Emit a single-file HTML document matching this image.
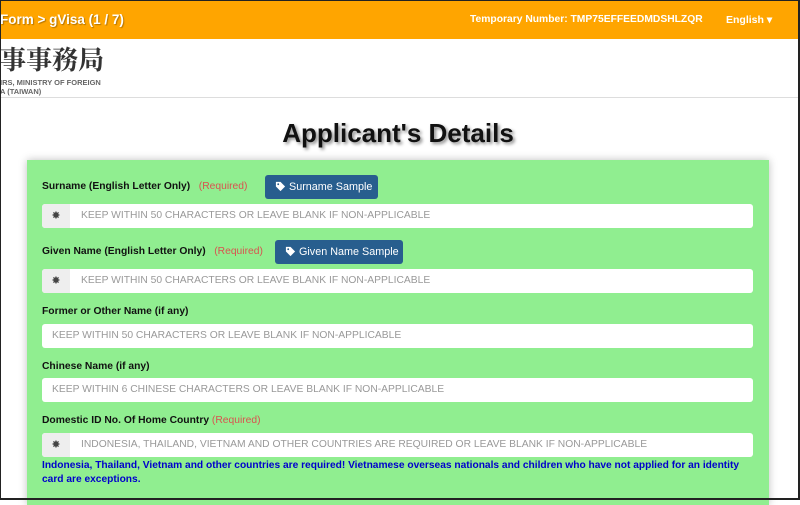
<!DOCTYPE html>
<html><head><meta charset="utf-8"><style>
*{box-sizing:border-box;margin:0;padding:0}
body{width:800px;height:500px;overflow:hidden;background:#fff;font-family:"Liberation Sans",Arial,sans-serif;position:relative}
.frame{position:absolute;inset:0;border:1px solid #222;border-right:2px solid #222;border-bottom:2px solid #222;pointer-events:none;z-index:9}
.top{position:absolute;left:0;top:0;width:800px;height:39px;background:#ffa500;color:#fff;font-weight:bold}
.top .t{position:absolute;left:0;top:12px;font-size:13.5px;text-shadow:1px 1px 1px rgba(0,0,0,.3)}
.top .n{position:absolute;left:470px;top:14px;font-size:10.3px}
.top .e{position:absolute;left:726px;top:14px;font-size:10.5px}
.logo{position:absolute;left:0;top:40px;width:800px;height:58px;border-bottom:1px solid #ddd}
.logo .c{position:absolute;left:0;top:3px;font-family:"Noto Serif CJK SC","Noto Sans CJK TC",serif;font-size:26px;font-weight:bold;color:#333;line-height:32px}
.logo .s{position:absolute;left:0;font-size:7.5px;color:#666;font-weight:bold}
h1{position:absolute;left:0;width:796px;text-align:center;top:118px;font-size:26px;font-weight:bold;color:#111;text-shadow:2px 2px 3px rgba(0,0,0,.45)}
.panel{position:absolute;left:27px;top:160px;width:742px;height:345px;background:#90ee90;box-shadow:0 0 8px rgba(0,0,0,.25)}
.lbl{position:absolute;left:42px;font-size:10.3px;font-weight:bold;color:#111}
.req{color:#d9534f;font-weight:normal}
.btn{position:absolute;height:24px;background:#285e8e;color:#fff;border-radius:3px;font-size:10.8px;line-height:24px;padding-left:10px}
.btn svg{vertical-align:-2px;margin-right:3px}
.in{position:absolute;left:42px;width:711px;height:24px;background:#fff;border-radius:3px;font-size:10.3px;color:#999;line-height:24px}
.in .a{position:absolute;left:0;top:0;width:28px;height:24px;background:#eee;border-radius:3px 0 0 3px;text-align:center;color:#444;font-size:11px}
.in .p{position:absolute;left:39px}
.in.n .p{left:10px}
.note{position:absolute;left:42px;top:459px;width:715px;font-size:10.2px;font-weight:bold;color:#0000cc;line-height:14px}
</style></head><body>
<div class="top"><div class="t">Form &gt; gVisa (1 / 7)</div><div class="n">Temporary Number: TMP75EFFEEDMDSHLZQR</div><div class="e">English ▾</div></div>
<div class="logo"><div class="c">事事務局</div><div class="s" style="top:38px">IRS, MINISTRY OF FOREIGN</div><div class="s" style="top:47px">A (TAIWAN)</div></div>
<h1>Applicant's Details</h1>
<div class="panel"></div>
<div class="lbl" style="top:181px">Surname (English Letter Only) &nbsp; <span class="req">(Required)</span></div>
<div class="btn" style="left:265px;top:175px;width:113px"><svg width="11" height="11" viewBox="0 0 12 12"><path d="M1 1h5l5 5-5 5-5-5z" fill="#fff"/><circle cx="3.5" cy="3.5" r="1" fill="#285e8e"/></svg>Surname Sample</div>
<div class="in" style="top:204px"><div class="a">✸</div><div class="p">KEEP WITHIN 50 CHARACTERS OR LEAVE BLANK IF NON-APPLICABLE</div></div>
<div class="lbl" style="top:246px">Given Name (English Letter Only) &nbsp; <span class="req">(Required)</span></div>
<div class="btn" style="left:275px;top:240px;width:128px"><svg width="11" height="11" viewBox="0 0 12 12"><path d="M1 1h5l5 5-5 5-5-5z" fill="#fff"/><circle cx="3.5" cy="3.5" r="1" fill="#285e8e"/></svg>Given Name Sample</div>
<div class="in" style="top:269px"><div class="a">✸</div><div class="p">KEEP WITHIN 50 CHARACTERS OR LEAVE BLANK IF NON-APPLICABLE</div></div>
<div class="lbl" style="top:306px">Former or Other Name (if any)</div>
<div class="in n" style="top:324px"><div class="p">KEEP WITHIN 50 CHARACTERS OR LEAVE BLANK IF NON-APPLICABLE</div></div>
<div class="lbl" style="top:361px">Chinese Name (if any)</div>
<div class="in n" style="top:378px"><div class="p">KEEP WITHIN 6 CHINESE CHARACTERS OR LEAVE BLANK IF NON-APPLICABLE</div></div>
<div class="lbl" style="top:415px">Domestic ID No. Of Home Country <span class="req">(Required)</span></div>
<div class="in" style="top:433px"><div class="a">✸</div><div class="p" style="font-size:10.3px">INDONESIA, THAILAND, VIETNAM AND OTHER COUNTRIES ARE REQUIRED OR LEAVE BLANK IF NON-APPLICABLE</div></div>
<div class="note">Indonesia, Thailand, Vietnam and other countries are required! Vietnamese overseas nationals and children who have not applied for an identity card are exceptions.</div>
<div class="frame"></div>
</body></html>
